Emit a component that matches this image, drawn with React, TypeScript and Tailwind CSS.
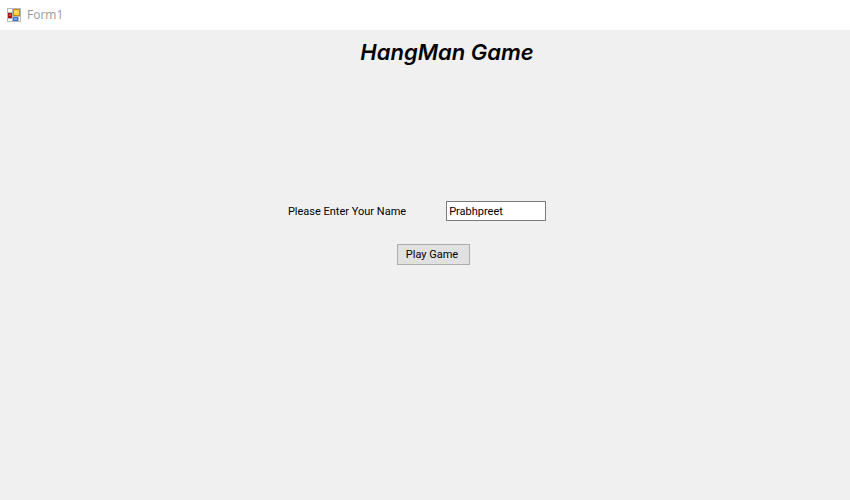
export default function App() {
  return (
    <div className="flex min-h-screen flex-col bg-[#f0f0f0] font-[Roboto,Arial,sans-serif] text-black">
      <header className="flex h-[30px] items-center gap-1.5 bg-white pl-[7px] font-['Open_Sans','Noto_Sans',sans-serif] text-xs text-[#999999]">
        <svg className="size-3.5" viewBox="0 0 14 14" aria-hidden="true" shapeRendering="crispEdges">
          <rect x="0" y="0" width="14" height="14" fill="#b9b9b9" />
          <path d="M1 1h4v3H1zM1 11h4v2H1zM12 9h1v4h-1z" fill="#ffffff" />
          <rect x="1" y="5" width="4" height="5" fill="#a81410" />
          <rect x="2" y="6" width="2" height="2" fill="#e04838" />
          <rect x="6" y="1" width="7" height="7" fill="#c48a10" />
          <rect x="7" y="2" width="5" height="5" fill="#ffd040" />
          <rect x="8" y="3" width="2" height="2" fill="#ffe48a" />
          <rect x="6" y="9" width="5" height="4" fill="#3d6fd0" />
          <rect x="7" y="10" width="3" height="2" fill="#7fabf5" />
        </svg>
        <span>Form1</span>
      </header>
      <main className="flex flex-col items-center">
        <h1 className="mt-2 ml-11 font-[Inter,Arial,sans-serif] text-[22px] leading-7 font-semibold italic">HangMan Game</h1>
        <form className="mt-[135px] mr-4 flex flex-col items-center text-[11px]" onSubmit={(e) => e.preventDefault()}>
          <div className="flex items-center gap-10">
            <label htmlFor="name" className="pt-0.5">Please Enter Your Name</label>
            <input id="name" defaultValue="Prabhpreet" className="h-5 w-[100px] border border-[#7a7a7a] bg-white px-0.5 outline-none" />
          </div>
          <button className="mt-[23px] ml-8 h-[21px] w-[73px] border border-[#adadad] bg-[#e1e1e1] pt-0.5 pr-0.5">Play Game</button>
        </form>
      </main>
    </div>
  );
}
